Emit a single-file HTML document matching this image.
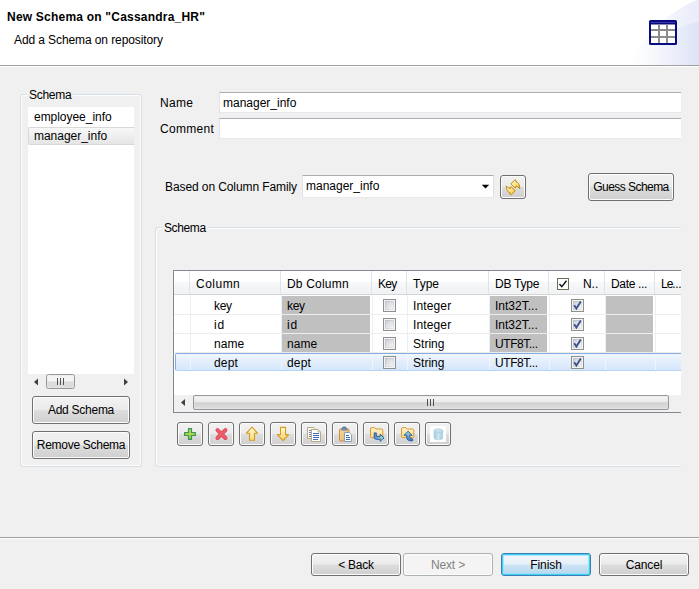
<!DOCTYPE html>
<html>
<head>
<meta charset="utf-8">
<title>New Schema</title>
<style>
html,body{margin:0;padding:0;}
body{width:699px;height:589px;position:relative;overflow:hidden;background:#f0f0f0;
 font-family:"Liberation Sans",sans-serif;font-size:12px;color:#000;}
.a{position:absolute;box-sizing:border-box;}
.t{position:absolute;white-space:nowrap;line-height:16px;height:16px;}
#hdr{left:0;top:0;width:699px;height:65px;background:#fff;}
#hdrline{left:0;top:65px;width:699px;height:1px;background:#a0a0a0;}
.grp{border:1px solid #d5dfe5;border-radius:3px;box-shadow:inset 0 0 0 1px #fdfdfd;}
.leg{background:#f0f0f0;padding:0 2px;margin-left:-2px;}
.inp{background:#fff;border:1px solid #e3e9ef;border-top-color:#abadb3;border-left-color:#e2e3ea;border-right-color:#dbdfe6;}
.btn{border:1px solid #707070;border-radius:3px;background:linear-gradient(#f2f2f2 0%,#ebebeb 48%,#dddddd 52%,#cfcfcf 100%);
 box-shadow:inset 0 0 0 1px #fcfcfc;text-align:center;}
.btn span{position:absolute;left:-20px;right:-20px;text-align:center;white-space:nowrap;}
.dis{border-color:#adb2b5;background:#f4f4f4;color:#838383;box-shadow:inset 0 0 0 1px #fcfcfc;}
.def{border-color:#3c7fb1;background:linear-gradient(#f2f7fb 0%,#e6f0f8 48%,#cde4f3 52%,#b4d8ee 100%);box-shadow:inset 0 0 0 1px #3fcdf6, inset 0 0 0 2px #8fe0f8aa;}
</style>
</head>
<body>
<!-- header -->
<div class="a" id="hdr"></div>
<svg class="a" style="left:599px;top:0" width="100" height="65" viewBox="0 0 100 65">
 <defs>
  <linearGradient id="hg1" x1="0" y1="0" x2="1" y2="0">
   <stop offset="0" stop-color="#ffffff"/><stop offset="0.35" stop-color="#f8f9fd"/><stop offset="1" stop-color="#e9edfa"/>
  </linearGradient>
  <linearGradient id="hg2" x1="0" y1="0" x2="1" y2="0">
   <stop offset="0" stop-color="#ffffff" stop-opacity="0"/><stop offset="0.4" stop-color="#eef1fb" stop-opacity="0.6"/><stop offset="1" stop-color="#dde3f6"/>
  </linearGradient>
 </defs>
 <path d="M100 0 L98 0 C72 10 45 35 30 65 L100 65 Z" fill="url(#hg1)"/>
 <path d="M100 22 C80 24 55 40 42 65 L100 65 Z" fill="url(#hg2)"/>
</svg>
<div class="a" id="hdrline"></div>
<div class="a" style="left:0;top:66px;width:699px;height:1px;background:#fff;"></div>
<div class="t" id="title" style="left:7.00px;top:9px;letter-spacing:0.214px;font-weight:bold;">New Schema on "Cassandra_HR"</div>
<div class="t" id="subtitle" style="left:14.00px;top:32px;letter-spacing:-0.097px;">Add a Schema on repository</div>
<!-- header icon -->
<svg class="a" style="left:649px;top:20px" width="28" height="25" viewBox="0 0 28 25">
 <rect x="0" y="0" width="28" height="25" rx="1.5" fill="#0a0a82"/>
 <rect x="2" y="4.5" width="24" height="18.5" fill="#fff"/>
 <rect x="2" y="2" width="24" height="1" fill="#3a3aa0"/>
 <rect x="2" y="9" width="24" height="2" fill="#8c8c8c"/>
 <rect x="2" y="16" width="24" height="2" fill="#8c8c8c"/>
 <rect x="9" y="4.5" width="2" height="18.5" fill="#8c8c8c"/>
 <rect x="17" y="4.5" width="2" height="18.5" fill="#8c8c8c"/>
</svg>

<!-- left group -->
<div class="a grp" style="left:20px;top:94px;width:122px;height:373px;"></div>
<div class="t leg" id="leg1" style="left:29.00px;top:87px;letter-spacing:-0.288px;">Schema</div>
<div class="a" style="left:28px;top:107px;width:106px;height:267px;background:#fff;"></div>
<div class="t" id="li1" style="left:34.00px;top:109px;letter-spacing:-0.036px;">employee_info</div>
<div class="a" style="left:28px;top:127px;width:106px;height:18px;background:linear-gradient(#f8f8f8,#e5e5e5);border:1px solid #d9d9d9;border-right:none;border-radius:2px 0 0 2px;"></div>
<div class="t" id="li2" style="left:34.00px;top:128px;letter-spacing:-0.025px;">manager_info</div>
<!-- list scrollbar -->
<div class="a" style="left:28px;top:374px;width:106px;height:17px;background:#f0f0f0;"></div>
<svg class="a" style="left:28px;top:374px" width="106" height="17" viewBox="0 0 106 17">
 <path d="M10 4.5 L10 11.5 L6 8 Z" fill="#404040"/>
 <path d="M96 4.5 L96 11.5 L100 8 Z" fill="#404040"/>
 <rect x="18.5" y="0.5" width="28" height="14" rx="2" fill="#e8e8e8" stroke="#979797"/>
 <rect x="19.5" y="1.5" width="26" height="6" fill="#f4f4f4"/>
 <rect x="19.5" y="7.5" width="26" height="6" fill="#dcdcdc"/>
 <rect x="29" y="4" width="1" height="7" fill="#505050"/>
 <rect x="32" y="4" width="1" height="7" fill="#505050"/>
 <rect x="35" y="4" width="1" height="7" fill="#505050"/>
</svg>
<div class="a btn" style="left:32px;top:396px;width:98px;height:28px;">
<span id="b_add" style="top:5px;line-height:16px;letter-spacing:-0.263px;">Add Schema</span>
</div>
<div class="a btn" style="left:32px;top:431px;width:98px;height:28px;">
<span id="b_rem" style="top:5px;line-height:16px;letter-spacing:-0.277px;">Remove Schema</span>
</div>
<!-- name / comment -->
<div class="t" id="l_name" style="left:160.00px;top:95px;letter-spacing:0.308px;">Name</div>
<div class="a inp" style="left:219px;top:92px;width:462px;height:21px;border-right:none;"></div>
<div class="t" id="v_name" style="left:223.00px;top:95px;letter-spacing:-0.002px;">manager_info</div>
<div class="t" id="l_comment" style="left:160.00px;top:121px;letter-spacing:0.301px;">Comment</div>
<div class="a inp" style="left:219px;top:118px;width:462px;height:21px;border-right:none;"></div>
<!-- column family row -->
<div class="t" id="l_cf" style="left:165.00px;top:179px;letter-spacing:-0.094px;">Based on Column Family</div>
<div class="a inp" style="left:302px;top:175px;width:192px;height:23px;"></div>
<div class="t" id="v_cf" style="left:306.00px;top:178px;letter-spacing:-0.006px;">manager_info</div>
<svg class="a" style="left:481px;top:184px" width="9" height="6" viewBox="0 0 9 6"><path d="M0.8 0.8 L8.2 0.8 L4.5 4.6 Z" fill="#000"/></svg>
<div class="a btn" style="left:500px;top:175px;width:26px;height:24px;">
</div>
<svg class="a" style="left:505px;top:179px" width="16" height="18" viewBox="0 0 16 18"><defs><linearGradient id="yg" x1="0" y1="0" x2="1" y2="1"><stop offset="0" stop-color="#fffce6"/><stop offset="0.5" stop-color="#fde486"/><stop offset="1" stop-color="#f5bd2e"/></linearGradient></defs><path d="M5.90 4.90 L9.60 1.10 L10.90 1.10 L10.90 2.90 Q14.60 3.20 14.80 9.80 Q13.40 7.30 10.90 7.00 L10.90 8.70 L9.90 8.70 Z" fill="url(#yg)" stroke="#c58a10" stroke-width="1" stroke-linejoin="round"/><path d="M10.20 11.70 L6.50 15.50 L5.20 15.50 L5.20 13.70 Q1.50 13.40 1.30 6.80 Q2.70 9.30 5.20 9.60 L5.20 7.90 L6.20 7.90 Z" fill="url(#yg)" stroke="#c58a10" stroke-width="1" stroke-linejoin="round"/></svg>
<div class="a btn" style="left:588px;top:173px;width:86px;height:28px;">
<span id="b_guess" style="top:5px;line-height:16px;letter-spacing:-0.551px;">Guess Schema</span>
</div>
<!-- right group -->
<div class="a" style="left:155px;top:227px;width:526px;height:240px;border:1px solid #d5dfe5;border-right:none;border-radius:3px 0 0 3px;box-shadow:inset 1px 1px 0 0 #fdfdfd, inset 0 -1px 0 0 #fdfdfd;"></div>
<div class="t leg" id="leg2" style="left:164.00px;top:220px;letter-spacing:-0.388px;">Schema</div>
<!-- table -->
<svg class="a" style="left:0;top:0" width="0" height="0"><defs><linearGradient id="cbg" x1="0" y1="0" x2="1" y2="1"><stop offset="0" stop-color="#cfd3da"/><stop offset="1" stop-color="#f3f3f3"/></linearGradient><linearGradient id="cbg2" x1="0" y1="0" x2="1" y2="1"><stop offset="0" stop-color="#b9bdc4"/><stop offset="1" stop-color="#e9e9ea"/></linearGradient></defs></svg>
<div class="a" id="tbl" style="left:173px;top:270px;width:508px;height:143px;border:1px solid #828790;border-right:none;background:#fff;overflow:hidden;">
<div class="a" style="left:0;top:0;width:520px;height:24px;background:linear-gradient(#ffffff 0%,#ffffff 45%,#f7f8fa 50%,#f1f2f4 100%);border-bottom:1px solid #d5d5d5;"></div>
<div class="a" style="left:15px;top:0;width:1px;height:23px;background:#dfe2e8;"></div>
<div class="a" style="left:16px;top:24px;width:1px;height:77px;background:#e9f0fa;"></div>
<div class="a" style="left:106px;top:0;width:1px;height:23px;background:#dfe2e8;"></div>
<div class="a" style="left:107px;top:24px;width:1px;height:77px;background:#e9f0fa;"></div>
<div class="a" style="left:197px;top:0;width:1px;height:23px;background:#dfe2e8;"></div>
<div class="a" style="left:198px;top:24px;width:1px;height:77px;background:#e9f0fa;"></div>
<div class="a" style="left:232px;top:0;width:1px;height:23px;background:#dfe2e8;"></div>
<div class="a" style="left:233px;top:24px;width:1px;height:77px;background:#e9f0fa;"></div>
<div class="a" style="left:314px;top:0;width:1px;height:23px;background:#dfe2e8;"></div>
<div class="a" style="left:315px;top:24px;width:1px;height:77px;background:#e9f0fa;"></div>
<div class="a" style="left:374px;top:0;width:1px;height:23px;background:#dfe2e8;"></div>
<div class="a" style="left:375px;top:24px;width:1px;height:77px;background:#e9f0fa;"></div>
<div class="a" style="left:430px;top:0;width:1px;height:23px;background:#dfe2e8;"></div>
<div class="a" style="left:431px;top:24px;width:1px;height:77px;background:#e9f0fa;"></div>
<div class="a" style="left:480px;top:0;width:1px;height:23px;background:#dfe2e8;"></div>
<div class="a" style="left:481px;top:24px;width:1px;height:77px;background:#e9f0fa;"></div>
<div class="a" style="left:0;top:43px;width:520px;height:1px;background:#ededed;"></div>
<div class="a" style="left:0;top:62px;width:520px;height:1px;background:#ededed;"></div>
<div class="a" style="left:0;top:81px;width:520px;height:1px;background:#ededed;"></div>
<div class="t" id="h_col" style="left:22.00px;top:5px;letter-spacing:0.487px;">Column</div>
<div class="t" id="h_db" style="left:113.00px;top:5px;letter-spacing:0.193px;">Db Column</div>
<div class="t" id="h_key" style="left:204.00px;top:5px;letter-spacing:-0.758px;">Key</div>
<div class="t" id="h_type" style="left:239.00px;top:5px;letter-spacing:-0.018px;">Type</div>
<div class="t" id="h_dbt" style="left:321.00px;top:5px;letter-spacing:-0.246px;">DB Type</div>
<div class="t" id="h_n" style="left:409.00px;top:5px;letter-spacing:-0.050px;">N..</div>
<div class="t" id="h_date" style="left:437.00px;top:5px;letter-spacing:-0.330px;">Date ...</div>
<div class="t" id="h_le" style="left:487.00px;top:5px;"><span style="letter-spacing:-1px">Le</span><span style="letter-spacing:-0.4px">...</span></div>
<svg class="a" style="left:383px;top:7px" width="12" height="12" viewBox="0 0 12 12"><rect x="0.5" y="0.5" width="11" height="11" fill="#fff" stroke="#6e6e58"/><path d="M2.5 6 L4.8 8.6 L9.5 2.8" fill="none" stroke="#111" stroke-width="1.4"/></svg>
<div class="a" style="left:108px;top:25px;width:88px;height:18px;background:#c0c0c0;"></div>
<div class="a" style="left:316px;top:25px;width:57px;height:18px;background:#c0c0c0;"></div>
<div class="a" style="left:432px;top:25px;width:47px;height:18px;background:#c0c0c0;"></div>
<div class="t" id="r0_c" style="left:40.00px;top:27px;letter-spacing:-0.308px;">key</div>
<div class="t" id="r0_d" style="left:113.00px;top:27px;letter-spacing:-0.308px;">key</div>
<div class="t" id="r0_t" style="left:239.00px;top:27px;letter-spacing:0.130px;">Integer</div>
<div class="t" id="r0_dt" style="left:321.00px;top:27px;letter-spacing:0.010px;">Int32T...</div>
<svg class="a" style="left:209px;top:28px" width="13" height="13" viewBox="0 0 13 13"><rect x="0.5" y="0.5" width="12" height="12" fill="#f4f4f4" stroke="#8e8f8f"/><rect x="2" y="2" width="9" height="9" fill="url(#cbg2)"/><rect x="3" y="3" width="7" height="7" fill="url(#cbg)"/></svg>
<svg class="a" style="left:397px;top:28px" width="13" height="13" viewBox="0 0 13 13"><rect x="0.5" y="0.5" width="12" height="12" fill="#f4f4f4" stroke="#8e8f8f"/><rect x="2" y="2" width="9" height="9" fill="url(#cbg2)"/><rect x="3" y="3" width="7" height="7" fill="url(#cbg)"/><path d="M3.2 6.2 L5.4 9.6 L9.8 2.6" fill="none" stroke="#3b4f8f" stroke-width="1.8"/></svg>
<div class="a" style="left:108px;top:44px;width:88px;height:18px;background:#c0c0c0;"></div>
<div class="a" style="left:316px;top:44px;width:57px;height:18px;background:#c0c0c0;"></div>
<div class="a" style="left:432px;top:44px;width:47px;height:18px;background:#c0c0c0;"></div>
<div class="t" id="r1_c" style="left:40.00px;top:46px;letter-spacing:0.833px;">id</div>
<div class="t" id="r1_d" style="left:113.00px;top:46px;letter-spacing:0.833px;">id</div>
<div class="t" id="r1_t" style="left:239.00px;top:46px;letter-spacing:0.130px;">Integer</div>
<div class="t" id="r1_dt" style="left:321.00px;top:46px;letter-spacing:0.010px;">Int32T...</div>
<svg class="a" style="left:209px;top:47px" width="13" height="13" viewBox="0 0 13 13"><rect x="0.5" y="0.5" width="12" height="12" fill="#f4f4f4" stroke="#8e8f8f"/><rect x="2" y="2" width="9" height="9" fill="url(#cbg2)"/><rect x="3" y="3" width="7" height="7" fill="url(#cbg)"/></svg>
<svg class="a" style="left:397px;top:47px" width="13" height="13" viewBox="0 0 13 13"><rect x="0.5" y="0.5" width="12" height="12" fill="#f4f4f4" stroke="#8e8f8f"/><rect x="2" y="2" width="9" height="9" fill="url(#cbg2)"/><rect x="3" y="3" width="7" height="7" fill="url(#cbg)"/><path d="M3.2 6.2 L5.4 9.6 L9.8 2.6" fill="none" stroke="#3b4f8f" stroke-width="1.8"/></svg>
<div class="a" style="left:108px;top:63px;width:88px;height:18px;background:#c0c0c0;"></div>
<div class="a" style="left:316px;top:63px;width:57px;height:18px;background:#c0c0c0;"></div>
<div class="a" style="left:432px;top:63px;width:47px;height:18px;background:#c0c0c0;"></div>
<div class="t" id="r2_c" style="left:40.00px;top:65px;letter-spacing:0.051px;">name</div>
<div class="t" id="r2_d" style="left:113.00px;top:65px;letter-spacing:0.051px;">name</div>
<div class="t" id="r2_t" style="left:239.00px;top:65px;letter-spacing:0.025px;">String</div>
<div class="t" id="r2_dt" style="left:321.00px;top:65px;letter-spacing:-0.430px;">UTF8T...</div>
<svg class="a" style="left:209px;top:66px" width="13" height="13" viewBox="0 0 13 13"><rect x="0.5" y="0.5" width="12" height="12" fill="#f4f4f4" stroke="#8e8f8f"/><rect x="2" y="2" width="9" height="9" fill="url(#cbg2)"/><rect x="3" y="3" width="7" height="7" fill="url(#cbg)"/></svg>
<svg class="a" style="left:397px;top:66px" width="13" height="13" viewBox="0 0 13 13"><rect x="0.5" y="0.5" width="12" height="12" fill="#f4f4f4" stroke="#8e8f8f"/><rect x="2" y="2" width="9" height="9" fill="url(#cbg2)"/><rect x="3" y="3" width="7" height="7" fill="url(#cbg)"/><path d="M3.2 6.2 L5.4 9.6 L9.8 2.6" fill="none" stroke="#3b4f8f" stroke-width="1.8"/></svg>
<div class="a" style="left:1px;top:82px;width:520px;height:18px;border:1px solid #84acdd;border-bottom-color:#b9d3f3;border-radius:2px;background:linear-gradient(#f0f6fe,#d5e6fb);"></div>
<div class="a" style="left:16px;top:83px;width:1px;height:16px;background:#f1f6fd;"></div>
<div class="a" style="left:107px;top:83px;width:1px;height:16px;background:#f1f6fd;"></div>
<div class="a" style="left:198px;top:83px;width:1px;height:16px;background:#f1f6fd;"></div>
<div class="a" style="left:233px;top:83px;width:1px;height:16px;background:#f1f6fd;"></div>
<div class="a" style="left:315px;top:83px;width:1px;height:16px;background:#f1f6fd;"></div>
<div class="a" style="left:375px;top:83px;width:1px;height:16px;background:#f1f6fd;"></div>
<div class="a" style="left:431px;top:83px;width:1px;height:16px;background:#f1f6fd;"></div>
<div class="a" style="left:481px;top:83px;width:1px;height:16px;background:#f1f6fd;"></div>
<div class="t" id="r3_c" style="left:40.00px;top:84px;letter-spacing:0.196px;">dept</div>
<div class="t" id="r3_d" style="left:113.00px;top:84px;letter-spacing:0.196px;">dept</div>
<div class="t" id="r3_t" style="left:239.00px;top:84px;letter-spacing:0.025px;">String</div>
<div class="t" id="r3_dt" style="left:321.00px;top:84px;letter-spacing:-0.430px;">UTF8T...</div>
<svg class="a" style="left:209px;top:85px" width="13" height="13" viewBox="0 0 13 13"><rect x="0.5" y="0.5" width="12" height="12" fill="#f4f4f4" stroke="#8e8f8f"/><rect x="2" y="2" width="9" height="9" fill="url(#cbg2)"/><rect x="3" y="3" width="7" height="7" fill="url(#cbg)"/></svg>
<svg class="a" style="left:397px;top:85px" width="13" height="13" viewBox="0 0 13 13"><rect x="0.5" y="0.5" width="12" height="12" fill="#f4f4f4" stroke="#8e8f8f"/><rect x="2" y="2" width="9" height="9" fill="url(#cbg2)"/><rect x="3" y="3" width="7" height="7" fill="url(#cbg)"/><path d="M3.2 6.2 L5.4 9.6 L9.8 2.6" fill="none" stroke="#3b4f8f" stroke-width="1.8"/></svg>
<div class="a" style="left:0;top:124px;width:520px;height:17px;background:#f0f0f0;"></div>
<svg class="a" style="left:0;top:124px" width="520" height="17" viewBox="0 0 520 17"><path d="M11 4 L11 11 L7 7.5 Z" fill="#404040"/><rect x="19.5" y="0.5" width="475" height="14" rx="1.5" fill="#e4e4e4" stroke="#979797"/><defs><linearGradient id="th1" x1="0" y1="0" x2="0" y2="1"><stop offset="0" stop-color="#f5f5f5"/><stop offset="1" stop-color="#e9e9e9"/></linearGradient><linearGradient id="th2" x1="0" y1="0" x2="0" y2="1"><stop offset="0" stop-color="#cfcfcf"/><stop offset="1" stop-color="#dfdfdf"/></linearGradient></defs><rect x="20.5" y="1.5" width="473" height="6" fill="url(#th1)"/><rect x="20.5" y="7.5" width="473" height="6" fill="url(#th2)"/><rect x="253" y="4" width="1" height="7" fill="#505050"/><rect x="256" y="4" width="1" height="7" fill="#505050"/><rect x="259" y="4" width="1" height="7" fill="#505050"/></svg>
</div>
<!-- toolbar -->
<div class="a btn" style="left:177px;top:422px;width:26px;height:24px;"></div>
<svg class="a" style="left:182px;top:426px" width="16" height="16" viewBox="0 0 16 16"><defs><linearGradient id="gpl" x1="0" y1="0" x2="0" y2="1"><stop offset="0" stop-color="#c4dc52"/><stop offset="1" stop-color="#9ccb3e"/></linearGradient></defs>
<path d="M6.5 2.6 H9.5 V6.5 H13.4 V9.5 H9.5 V13.4 H6.5 V9.5 H2.6 V6.5 H6.5 Z" fill="url(#gpl)" stroke="#32975a" stroke-width="1.2" stroke-linejoin="round"/></svg>
<div class="a btn" style="left:208px;top:422px;width:26px;height:24px;"></div>
<svg class="a" style="left:213px;top:426px" width="16" height="16" viewBox="0 0 16 16"><path d="M4.5 4.1 L12.4 12.0 M12.4 4.1 L4.5 12.0" stroke="#df485b" stroke-width="4" stroke-linecap="round" fill="none"/>
<path d="M4.5 4.1 L12.4 12.0 M12.4 4.1 L4.5 12.0" stroke="#ec5c6b" stroke-width="2.4" stroke-linecap="round" fill="none"/></svg>
<div class="a btn" style="left:239px;top:422px;width:26px;height:24px;"></div>
<svg class="a" style="left:244px;top:426px" width="16" height="16" viewBox="0 0 16 16"><defs><linearGradient id="gar" x1="0" y1="0" x2="0" y2="1"><stop offset="0" stop-color="#fffbe0"/><stop offset="1" stop-color="#fbd977"/></linearGradient></defs>
<path d="M8 1.2 L13.6 7.2 H10.5 V14.2 H5.5 V7.2 H2.4 Z" fill="url(#gar)" stroke="#d99a1e" stroke-width="1.1" stroke-linejoin="round"/></svg>
<div class="a btn" style="left:270px;top:422px;width:26px;height:24px;"></div>
<svg class="a" style="left:275px;top:426px" width="16" height="16" viewBox="0 0 16 16"><defs><linearGradient id="gar2" x1="0" y1="0" x2="0" y2="1"><stop offset="0" stop-color="#fffbe0"/><stop offset="1" stop-color="#fbd05e"/></linearGradient></defs>
<path d="M8 14.6 L13.6 8.6 H10.5 V1.4 H5.5 V8.6 H2.4 Z" fill="url(#gar2)" stroke="#d99a1e" stroke-width="1.1" stroke-linejoin="round"/></svg>
<div class="a btn" style="left:301px;top:422px;width:26px;height:24px;"></div>
<svg class="a" style="left:306px;top:426px" width="16" height="16" viewBox="0 0 16 16"><path d="M1.5 1.5 H8 L10 3.5 V12.5 H1.5 Z" fill="#fdfaf0" stroke="#b9ab85" stroke-width="1"/>
<path d="M3 4.5 H5 M3 6.5 H5 M3 8.5 H5 M3 10.5 H5" stroke="#5b7fc0" stroke-width="1"/>
<path d="M5.5 3.5 H12 L14.5 6 V15.5 H5.5 Z" fill="#ffffff" stroke="#b9ab85" stroke-width="1"/>
<path d="M12 3.5 V6 H14.5" fill="#e8dfc4" stroke="#b9ab85" stroke-width="0.8"/>
<path d="M7 7.5 H13 M7 9.5 H13 M7 11.5 H13 M7 13.5 H12" stroke="#3f68b6" stroke-width="1"/></svg>
<div class="a btn" style="left:332px;top:422px;width:26px;height:24px;"></div>
<svg class="a" style="left:337px;top:426px" width="16" height="16" viewBox="0 0 16 16"><defs><linearGradient id="gcb" x1="0" y1="0" x2="1" y2="1"><stop offset="0" stop-color="#f8dcA6"/><stop offset="1" stop-color="#e6ad5e"/></linearGradient></defs>
<rect x="2.5" y="3" width="9.5" height="12" rx="1" fill="url(#gcb)" stroke="#c98f3e" stroke-width="1"/>
<path d="M5 3.6 V2.2 L6.2 1 H8.4 L9.6 2.2 V3.6 Z" fill="#6f88a8" stroke="#4e6482" stroke-width="0.8"/>
<rect x="4" y="3.2" width="6.6" height="1.4" fill="#7d95b4"/>
<path d="M7.5 6.5 H12.2 L14.5 8.8 V15.5 H7.5 Z" fill="#fff" stroke="#8aa0bd" stroke-width="1"/>
<path d="M9 9.5 H12 M9 11.5 H13 M9 13.5 H13" stroke="#3f68b6" stroke-width="1"/></svg>
<div class="a btn" style="left:363px;top:422px;width:26px;height:24px;"></div>
<svg class="a" style="left:368px;top:426px" width="16" height="16" viewBox="0 0 16 16"><defs><linearGradient id="gfo" x1="0" y1="0" x2="0" y2="1"><stop offset="0" stop-color="#fff4d2"/><stop offset="1" stop-color="#fad688"/></linearGradient>
<linearGradient id="gbl" x1="0" y1="0" x2="1" y2="0"><stop offset="0" stop-color="#4f8fd6"/><stop offset="1" stop-color="#a9dcc4"/></linearGradient></defs>
<path d="M2.5 3 Q2.5 1.6 3.8 1.6 H6.6 L8 3 H13.6 Q14.8 3 14.8 4.2 V10.4 Q14.8 11.6 13.6 11.6 H3.8 Q2.5 11.6 2.5 10.4 Z" fill="url(#gfo)" stroke="#d9982e" stroke-width="1"/>
<path d="M6.2 6.9 H8.3 V10.3 H12.2 V8.2 L16 11.85 L12.2 15.4 V13.3 H8.2 Q6.2 13.3 6.2 11.2 Z" fill="url(#gbl)" stroke="#1b57a8" stroke-width="0.9" stroke-linejoin="round"/></svg>
<div class="a btn" style="left:394px;top:422px;width:26px;height:24px;"></div>
<svg class="a" style="left:399px;top:426px" width="16" height="16" viewBox="0 0 16 16"><defs><linearGradient id="gfo2" x1="0" y1="0" x2="0" y2="1"><stop offset="0" stop-color="#fff4d2"/><stop offset="1" stop-color="#fad688"/></linearGradient>
<linearGradient id="gbl2" x1="0" y1="0" x2="0" y2="1"><stop offset="0" stop-color="#a9dcc4"/><stop offset="1" stop-color="#3a7cc8"/></linearGradient></defs>
<path d="M2.5 3 Q2.5 1.6 3.8 1.6 H6.6 L8 3 H13.6 Q14.8 3 14.8 4.2 V10.4 Q14.8 11.6 13.6 11.6 H3.8 Q2.5 11.6 2.5 10.4 Z" fill="url(#gfo2)" stroke="#d9982e" stroke-width="1"/>
<path d="M9.06 5.2 L13.1 9.3 H10.8 V11.6 Q10.9 13 13.6 13 V14.9 Q7.8 15.2 7.8 11.6 V9.3 H5.0 Z" fill="url(#gbl2)" stroke="#1b57a8" stroke-width="0.9" stroke-linejoin="round"/></svg>
<div class="a btn" style="left:425px;top:422px;width:26px;height:24px;"></div>
<svg class="a" style="left:430px;top:426px" width="16" height="16" viewBox="0 0 16 16"><rect x="0" y="0" width="16" height="16" fill="#ffffff"/>
<defs><linearGradient id="gdb" x1="0" y1="0" x2="1" y2="0"><stop offset="0" stop-color="#9cc7da"/><stop offset="0.5" stop-color="#d4e8f0"/><stop offset="1" stop-color="#9cc7da"/></linearGradient></defs>
<path d="M4 4.6 V12 Q4 13.8 8.4 13.8 Q12.8 13.8 12.8 12 V4.6 Z" fill="url(#gdb)" stroke="#a9cfe0" stroke-width="0.6"/>
<ellipse cx="8.4" cy="4.6" rx="4.4" ry="1.8" fill="#c6e0ec" stroke="#9cc7da" stroke-width="0.6"/>
<path d="M4 7.2 Q8.4 9.2 12.8 7.2 M4 9.8 Q8.4 11.8 12.8 9.8" fill="none" stroke="#b9d9e6" stroke-width="0.6"/></svg>
<!-- footer -->
<div class="a" style="left:0;top:537px;width:699px;height:1px;background:#a0a0a0;"></div>
<div class="a" style="left:0;top:538px;width:699px;height:1px;background:#fff;"></div>
<div class="a btn" style="left:311px;top:553px;width:90px;height:23px;">
<span id="f_back" style="top:3px;line-height:16px;letter-spacing:-0.233px;">&lt; Back</span>
</div>
<div class="a btn dis" style="left:403px;top:553px;width:90px;height:23px;">
<span id="f_next" style="top:3px;line-height:16px;letter-spacing:-0.151px;">Next &gt;</span>
</div>
<div class="a btn def" style="left:501px;top:553px;width:90px;height:23px;">
<span id="f_fin" style="top:3px;line-height:16px;letter-spacing:-0.051px;">Finish</span>
</div>
<div class="a btn" style="left:599px;top:553px;width:90px;height:23px;">
<span id="f_can" style="top:3px;line-height:16px;letter-spacing:-0.137px;">Cancel</span>
</div>
</body>
</html>
